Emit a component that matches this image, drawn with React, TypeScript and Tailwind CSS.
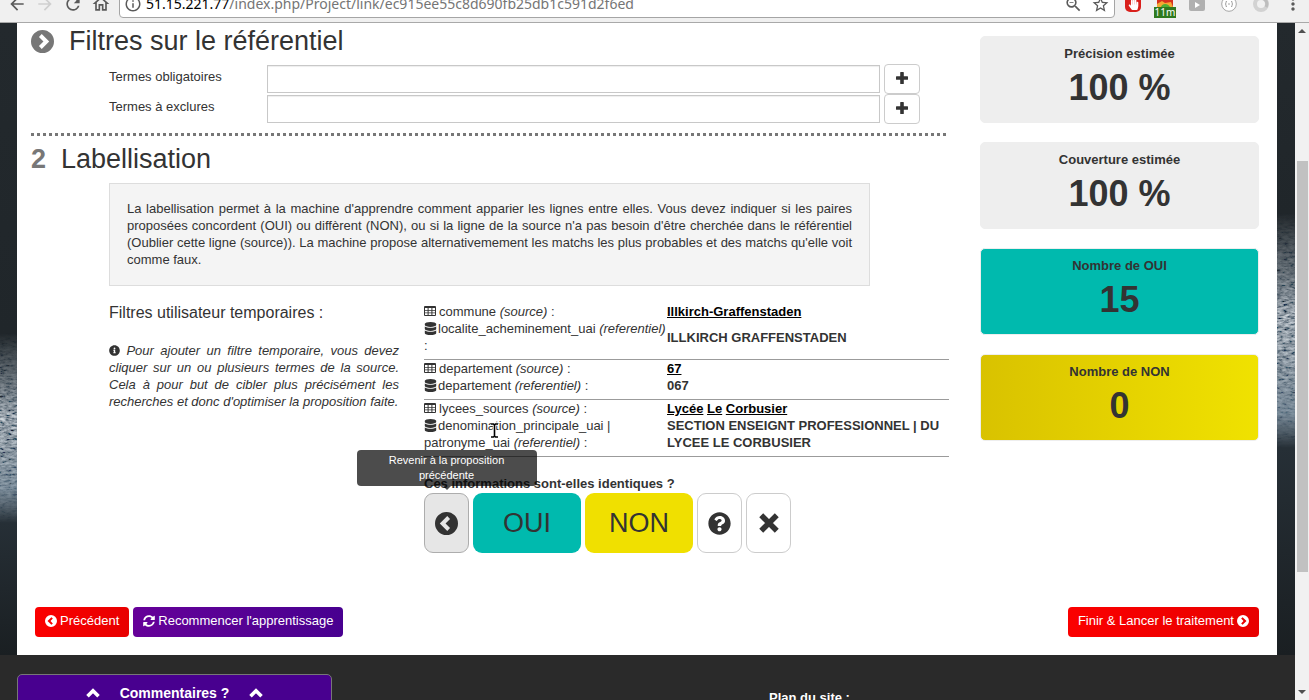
import type { ReactNode } from "react";
import { FaDatabase, FaHandPaper, FaInfoCircle, FaQuestionCircle, FaSyncAlt, FaYoutube } from "react-icons/fa";
import {
  MdArrowBack,
  MdArrowForward,
  MdInfoOutline,
  MdMoreVert,
  MdOutlineHome,
  MdRefresh,
  MdStarBorder,
  MdZoomOut,
} from "react-icons/md";

function CircleChevron({ className }: { className: string }) {
  return (
    <svg viewBox="0 0 24 24" className={className} aria-hidden="true">
      <path
        fill="currentColor"
        fillRule="evenodd"
        d="M12 0a12 12 0 1 1 0 24a12 12 0 1 1 0-24zM8.300 7.200L13 12l-4.700 4.800 2.900 2.900L19 12l-7.800-7.700z"
      />
    </svg>
  );
}

function PlusIcon() {
  return (
    <svg viewBox="0 0 12 12" className="size-3" fill="currentColor" aria-hidden="true">
      <path d="M4.800 0h2.400a.6.6 0 0 1 .6.6v3.600h3.600a.6.6 0 0 1 .6.6v2.400a.6.6 0 0 1-.6.6H7.800v3.600a.6.6 0 0 1-.6.6H4.800a.6.6 0 0 1-.6-.6V7.800H.6a.6.6 0 0 1-.6-.6V4.800a.6.6 0 0 1 .6-.6h3.600V.6a.6.6 0 0 1 .6-.6z" />
    </svg>
  );
}

function CrossIcon() {
  return (
    <svg viewBox="0 0 18 18" className="size-5" fill="none" stroke="currentColor" strokeWidth="5" aria-hidden="true">
      <path d="M2 2l14 14M16 2L2 16" />
    </svg>
  );
}

function ThickChevronUp() {
  return (
    <svg viewBox="0 0 14 10" className="mt-[5px] h-[10px] w-[14px]" fill="none" stroke="currentColor" strokeWidth="3.600" aria-hidden="true">
      <path d="M1.500 8.200L7 2.700l5.500 5.500" />
    </svg>
  );
}

function BrowserBar() {
  return (
    <header className="flex h-[23px] shrink-0 items-end overflow-hidden border-b border-[#a9a9a9] bg-[#f0f0f0] text-[#5a5a5a]">
      <nav className="flex shrink-0 items-center gap-2 pr-2 pb-2 pl-[7px]">
        <button type="button" aria-label="Page précédente"><MdArrowBack size={20} /></button>
        <button type="button" aria-label="Page suivante" className="text-[#cfcfcf]"><MdArrowForward size={20} /></button>
        <button type="button" aria-label="Actualiser"><MdRefresh size={20} /></button>
        <button type="button" aria-label="Accueil"><MdOutlineHome size={20} /></button>
      </nav>
      <div className="mb-1 flex h-7 min-w-0 flex-1 items-center gap-1 rounded-sm border border-[#a5a5a5] bg-white px-1">
        <MdInfoOutline size={18} className="shrink-0" />
        <p className="min-w-0 flex-1 truncate font-['Noto_Sans',sans-serif] text-[14px] leading-5 text-[#757575]">
          <span className="text-black">51.15.221.77</span>/index.php/Project/link/ec915ee55c8d690fb25db1c591d2f6ed
        </p>
        <button type="button" aria-label="Zoom" className="mr-1"><MdZoomOut size={19} /></button>
        <button type="button" aria-label="Favori"><MdStarBorder size={19} /></button>
      </div>
      <div className="flex shrink-0 items-end gap-4 pr-2 pb-1 pl-[10px]">
        <span className="mb-1.5 grid size-4 place-items-center rounded-[5px] bg-[#d9201c] text-white"><FaHandPaper size={11} /></span>
        <span className="-mx-[3px] flex w-[22px] flex-col items-center">
          <svg viewBox="0 0 16 8" className="h-2 w-4">
            <path d="M0 8V0h16v8z" fill="#d8321f" />
            <path d="M0 8V5l5-3 3 2 6-1 2 5z" fill="#f4a832" />
            <path d="M4 8c1-4 7-4 9 0z" fill="#4fae32" />
          </svg>
          <span className="h-[11px] w-full bg-[#2f7a1e] text-center font-['Noto_Sans',sans-serif] text-[10px] leading-[11px] text-white">11m</span>
        </span>
        <svg viewBox="0 0 16 12" className="mb-[7px] h-3 w-4" aria-hidden="true">
          <rect width="16" height="12" rx="2" fill="#b0b0b0" />
          <path d="M6 3l5 3-5 3z" fill="#fff" />
        </svg>
        <svg viewBox="0 0 16 16" className="mb-1.5 size-4" fill="none" stroke="#a6a6a6">
          <circle cx="8" cy="8" r="7.300" fill="#fff" />
          <path d="M6 5.500H5v2L4 8l1 .5v2h1M10 5.500h1v2l1 .5-1 .5v2h-1M7 8h2" />
        </svg>
        <svg viewBox="0 0 16 16" className="mb-1.5 size-4" fill="none">
          <circle cx="8" cy="8" r="6" stroke="#d2d2d2" strokeWidth="4" />
          <path d="M8 2a6 6 0 0 1 5 9" stroke="#bdbdbd" strokeWidth="3" />
        </svg>
        <button type="button" aria-label="Menu" className="mb-1 w-4"><MdMoreVert size={20} className="-ml-0.5" /></button>
      </div>
    </header>
  );
}

/* Decorative sea photograph visible on both sides of the page. */
function SeaEdge({ id, seed, from, to }: { id: string; seed: number; from: number; to: number }) {
  const mid = (from + to) / 2;
  return (
    <svg className="h-full w-full" preserveAspectRatio="none" viewBox="0 0 18 632" aria-hidden="true">
      <defs>
        <linearGradient id={`${id}-base`} x1="0" y1="0" x2="0" y2="632" gradientUnits="userSpaceOnUse">
          <stop offset="0" stopColor="#23292d" />
          <stop offset={from / 632} stopColor="#20262a" />
          <stop offset={mid / 632} stopColor="#56646f" />
          <stop offset={(to - 35) / 632} stopColor="#637787" />
          <stop offset={to / 632} stopColor="#262f36" />
          <stop offset="1" stopColor="#1a1f22" />
        </linearGradient>
        <linearGradient id={`${id}-fade`} x1="0" y1={from} x2="0" y2={to} gradientUnits="userSpaceOnUse">
          <stop offset="0" stopColor="#000" />
          <stop offset="0.3" stopColor="#888" />
          <stop offset="0.45" stopColor="#fff" />
          <stop offset="0.7" stopColor="#999" />
          <stop offset="1" stopColor="#000" />
        </linearGradient>
        <filter id={`${id}-waves`} x="0" y="0" width="100%" height="100%">
          <feTurbulence type="fractalNoise" baseFrequency="0.16 0.45" numOctaves="3" seed={seed} />
          <feColorMatrix values="1.7 0 0 0 -0.42  1.7 0 0 0 -0.37  1.7 0 0 0 -0.32  0 0 0 0 0.75" />
        </filter>
        <mask id={`${id}-mask`}>
          <rect width="18" height="632" fill={`url(#${id}-fade)`} />
        </mask>
      </defs>
      <rect width="18" height="632" fill={`url(#${id}-base)`} />
      <g mask={`url(#${id}-mask)`}>
        <rect width="18" height="632" filter={`url(#${id}-waves)`} />
      </g>
    </svg>
  );
}

function TermRow({ id, label }: { id: string; label: string }) {
  return (
    <div className="flex h-[30px] items-start">
      <label htmlFor={id} className="w-[158px] shrink-0 pt-1">{label}</label>
      <input id={id} className="mt-px h-7 min-w-0 flex-1 border border-[#c8c8c8] bg-white px-2 shadow-[inset_0_1px_1px_rgba(0,0,0,0.07)] outline-none" />
      <button type="button" aria-label={`Ajouter : ${label}`} className="ml-1 flex h-[30px] w-9 items-center justify-center rounded-[4px] border border-[#ccc] bg-white pb-0.5">
        <PlusIcon />
      </button>
    </div>
  );
}

function StatCard({ label, value, tone }: { label: string; value: string; tone: string }) {
  return (
    <section className={`h-[87px] rounded-[5px] border border-[#eee] pt-2 text-center font-bold ${tone}`}>
      <h3 className="leading-[18px]">{label}</h3>
      <p className="text-[36px] leading-[50px]">{value}</p>
    </section>
  );
}

function TableIcon() {
  return (
    <svg viewBox="0 0 12 10" className="mr-[3px] inline-block h-[10px] w-3 align-baseline" aria-hidden="true">
      <path
        fill="currentColor"
        fillRule="evenodd"
        d="M1 0h10a1 1 0 0 1 1 1v8a1 1 0 0 1-1 1H1a1 1 0 0 1-1-1V1a1 1 0 0 1 1-1zM1 2v2h2.600V2zM4.600 2v2h2.800V2zM8.400 2v2H11V2zM1 4.800v1.700h2.600V4.800zM4.600 4.800v1.700h2.800V4.800zM8.400 4.800v1.700H11V4.800zM1 7.300V9h2.600V7.300zM4.600 7.300V9h2.800V7.300zM8.400 7.300V9H11V7.300z"
      />
    </svg>
  );
}

function PairRows({ source, target, words, match }: { source: string; target: string; words: string[]; match: string }) {
  return (
    <tbody className="border-b border-[#9b9b9b]">
      <tr>
        <th scope="row" className="text-left align-top font-normal">
          <TableIcon />
          {source} <i>(source)</i> :
        </th>
        <td className="font-bold text-black">
          {words.map((word, i) => (
            <span key={word}>
              {i > 0 && " "}
              <a href="#filtre" className="underline">{word}</a>
            </span>
          ))}
        </td>
      </tr>
      <tr>
        <th scope="row" className="pb-[5px] text-left align-top font-normal">
          <FaDatabase size={13} className="mr-px inline-block align-[-2px]" />
          {target} <i>(referentiel)</i> :
        </th>
        <td className="pb-[5px] align-middle font-bold">{match}</td>
      </tr>
    </tbody>
  );
}

function SquareButton({ label, tone, children }: { label: string; tone: string; children: ReactNode }) {
  return (
    <button type="button" aria-label={label} className={`grid h-[60px] w-[45px] place-items-center rounded-[9px] border ${tone}`}>
      {children}
    </button>
  );
}

function Labelling() {
  return (
    <div className="grid grid-cols-[290px_1fr] gap-x-[25px] pl-[78px]">
      <div>
        <h3 className="text-[16px] leading-5">Filtres utilisateur temporaires :</h3>
        <p className="mt-[19px] text-justify italic">
          <FaInfoCircle size={11} className="inline-block align-[-1px]" /> Pour ajouter un filtre temporaire, vous devez
          cliquer sur un ou plusieurs termes de la source. Cela à pour but de cibler plus précisément les recherches et donc
          d'optimiser la proposition faite.
        </p>
      </div>
      <div>
        <table className="w-full table-fixed border-collapse">
          <colgroup>
            <col className="w-[243px]" />
            <col />
          </colgroup>
          <PairRows source="commune" target="localite_acheminement_uai" words={["Illkirch-Graffenstaden"]} match="ILLKIRCH GRAFFENSTADEN" />
          <PairRows source="departement" target="departement" words={["67"]} match="067" />
          <PairRows
            source="lycees_sources"
            target="denomination_principale_uai | patronyme_uai"
            words={["Lycée", "Le", "Corbusier"]}
            match="SECTION ENSEIGNT PROFESSIONNEL | DU LYCEE LE CORBUSIER"
          />
        </table>
        <p className="mt-[18px] mb-px font-bold">Ces informations sont-elles identiques ?</p>
        <div className="flex gap-1 text-[#333]">
          <div className="relative">
            <SquareButton label="Revenir à la proposition précédente" tone="border-[#adadad] bg-[#e6e6e6]">
              <CircleChevron className="size-[23px] rotate-180" />
            </SquareButton>
            <div
              role="tooltip"
              className="absolute bottom-[67px] left-1/2 w-[180px] -translate-x-1/2 rounded-[4px] bg-black/70 px-2 py-[3px] text-center text-[11px] leading-[15px] text-white after:absolute after:top-full after:left-1/2 after:-ml-1 after:border-4 after:border-transparent after:border-t-black/70"
            >
              Revenir à la proposition précédente
            </div>
          </div>
          <button type="button" className="h-[60px] w-[108px] rounded-[9px] bg-[#00baae] text-[27px]">OUI</button>
          <button type="button" className="h-[60px] w-[108px] rounded-[9px] bg-[#f0e000] text-[27px]">NON</button>
          <SquareButton label="Je ne sais pas" tone="border-[#ccc] bg-white"><FaQuestionCircle size={23} /></SquareButton>
          <SquareButton label="Oublier cette ligne" tone="border-[#ccc] bg-white"><CrossIcon /></SquareButton>
        </div>
      </div>
    </div>
  );
}

function TextCursor() {
  return (
    <svg viewBox="0 0 9 17" className="absolute top-[422px] left-[490px] h-[17px] w-[9px]" aria-hidden="true">
      <path d="M1 2h2.500l1 1 1-1H8M4.500 3v11M1 15h2.500l1-1 1 1H8" fill="none" stroke="#fff" strokeWidth="3.400" />
      <path d="M1 2h2.500l1 1 1-1H8M4.500 3v11M1 15h2.500l1-1 1 1H8" fill="none" stroke="#000" strokeWidth="1.600" />
    </svg>
  );
}

function Scrollbar() {
  return (
    <div className="flex w-[14px] shrink-0 flex-col items-center justify-between bg-[#f1f1f1] py-[6px]" aria-hidden="true">
      <span className="border-x-4 border-b-4 border-x-transparent border-b-[#505050]" />
      <span className="mt-32 mb-[118px] w-[11px] flex-1 bg-[#c1c1c1]" />
      <span className="border-x-4 border-t-4 border-x-transparent border-t-[#505050]" />
    </div>
  );
}

export default function App() {
  return (
    <div className="relative flex h-screen flex-col overflow-hidden bg-white font-['Liberation_Sans',Arial,sans-serif] text-[13px] leading-[17px] text-[#333]">
      <BrowserBar />
      <div className="flex min-h-0 flex-1">
        <div className="flex min-w-0 flex-1 flex-col">
          <div className="grid shrink-0 grid-cols-[17px_1fr_18px]">
            <div className="relative"><div className="absolute inset-0"><SeaEdge id="sea-left" seed={4} from={310} to={500} /></div></div>
            <main className="bg-white pb-[18px]">
              <div className="grid grid-cols-[1fr_279px] gap-x-[31px] pr-[18px] pl-[14px]">
                <div>
                  <h2 className="flex items-center pt-[3px] text-[27px] leading-[30px]">
                    <CircleChevron className="mr-[15px] size-[23px] text-[#777]" />
                    Filtres sur le référentiel
                  </h2>
                  <form className="mt-2 pr-[29px] pl-[78px]">
                    <TermRow id="termes-obligatoires" label="Termes obligatoires" />
                    <TermRow id="termes-exclus" label="Termes à exclures" />
                  </form>
                  <hr className="mt-[9px] h-[3px] border-0 bg-[repeating-linear-gradient(90deg,#777_0_3px,transparent_3px_6px)]" />
                  <h2 className="mt-2 text-[27px] leading-[30px]">
                    <b className="mr-[15px] text-[#777]">2</b>Labellisation
                  </h2>
                  <p className="mt-[9px] mr-[79px] mb-[17px] ml-[78px] border border-[#ddd] bg-[#f4f4f4] px-[17px] pt-4 pb-[17px] text-justify">
                    La labellisation permet à la machine d'apprendre comment apparier les lignes entre elles. Vous devez indiquer si
                    les paires proposées concordent (OUI) ou diffèrent (NON), ou si la ligne de la source n'a pas besoin d'être
                    cherchée dans le référentiel (Oublier cette ligne (source)). La machine propose alternativemement les matchs les
                    plus probables et des matchs qu'elle voit comme faux.
                  </p>
                  <Labelling />
                </div>
                <aside className="flex flex-col gap-[19px] pt-[13px]">
                  <StatCard label="Précision estimée" value="100 %" tone="bg-[#eee]" />
                  <StatCard label="Couverture estimée" value="100 %" tone="bg-[#eee]" />
                  <StatCard label="Nombre de OUI" value="15" tone="bg-[#00baae]" />
                  <StatCard label="Nombre de NON" value="0" tone="bg-linear-to-r from-[#d9c200] to-[#f0e200]" />
                </aside>
              </div>
              <div className="mt-[54px] flex gap-1 px-[18px] text-white">
                <button type="button" className="flex h-[30px] items-center gap-[3px] rounded-[4px] bg-linear-to-r from-[#fb0000] to-[#e80000] px-[10px] pb-[3px]">
                  <CircleChevron className="size-3 rotate-180" />Précédent
                </button>
                <button type="button" className="flex h-[30px] items-center gap-[3px] rounded-[4px] bg-linear-to-r from-[#660099] to-[#480090] px-[10px] pb-[3px]">
                  <FaSyncAlt size={12} />Recommencer l'apprentissage
                </button>
                <button type="button" className="ml-auto flex h-[30px] items-center gap-[3px] rounded-[4px] bg-linear-to-r from-[#fb0000] to-[#e80000] px-[10px] pb-[3px]">
                  Finir &amp; Lancer le traitement<CircleChevron className="size-3" />
                </button>
              </div>
            </main>
            <div className="relative"><div className="absolute inset-0"><SeaEdge id="sea-right" seed={9} from={190} to={425} /></div></div>
          </div>
          <footer className="flex flex-1 items-start bg-[#2a2a2a] px-[17px] pt-[19px] font-bold text-white">
            <button type="button" className="flex h-14 w-[315px] items-start justify-center gap-5 rounded-t-[5px] border border-[#777] bg-[#48008f] pt-2 text-[14px] leading-5">
              <ThickChevronUp />Commentaires ?<ThickChevronUp />
            </button>
            <h3 className="mt-[15px] ml-auto w-[509px]">Plan du site :</h3>
          </footer>
        </div>
        <Scrollbar />
      </div>
      <TextCursor />
    </div>
  );
}
